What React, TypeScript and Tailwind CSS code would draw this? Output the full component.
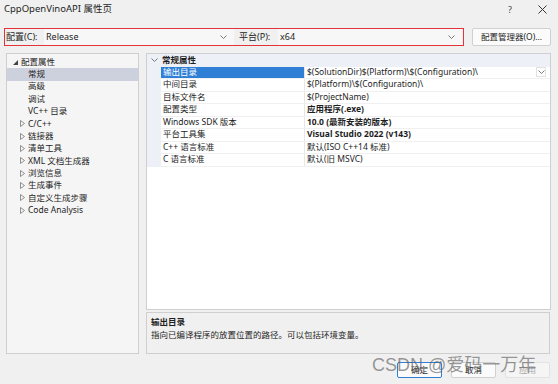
import React from "react"

const font = { fontFamily: '"Noto Sans", "Noto Sans CJK SC", sans-serif' }

const treeChildren = ["常规", "高级", "调试", "VC++ 目录"]
const treeCollapsed = ["C/C++", "链接器", "清单工具", "XML 文档生成器", "浏览信息", "生成事件", "自定义生成步骤", "Code Analysis"]

const props: { name: string; value: string; bold?: boolean }[] = [
  { name: "输出目录", value: "$(SolutionDir)$(Platform)\\$(Configuration)\\" },
  { name: "中间目录", value: "$(Platform)\\$(Configuration)\\" },
  { name: "目标文件名", value: "$(ProjectName)" },
  { name: "配置类型", value: "应用程序(.exe)", bold: true },
  { name: "Windows SDK 版本", value: "10.0 (最新安装的版本)", bold: true },
  { name: "平台工具集", value: "Visual Studio 2022 (v143)", bold: true },
  { name: "C++ 语言标准", value: "默认(ISO C++14 标准)" },
  { name: "C 语言标准", value: "默认(旧 MSVC)" },
]

function Chevron({ className = "" }: { className?: string }) {
  return (
    <svg width="7" height="4" viewBox="0 0 7 4" className={className}>
      <path d="M0.5 0.5 L3.5 3.5 L6.5 0.5" fill="none" stroke="#6b6b6b" strokeWidth="0.9" />
    </svg>
  )
}

function Combo({ label, value, labelW, width }: { label: string; value: string; labelW: string; width: string }) {
  return (
    <div className="flex h-full items-stretch">
      <div className={`flex items-center text-[9px] text-[#1e1e1e] ${labelW}`}>{label}</div>
      <div className={`flex items-center justify-between bg-[#f7f7f7] pl-[2px] pr-[7px] text-[9px] text-[#1e1e1e] ${width}`}>
        <span>{value}</span>
        <Chevron />
      </div>
    </div>
  )
}

export default function App() {
  return (
    <div className="relative h-[384px] w-[558px] overflow-hidden bg-[#f0f0f0] text-[#1e1e1e]" style={font}>
      {/* title */}
      <div className="flex h-[19px] items-center justify-between pl-[4px] pr-[11px]">
        <span className="text-[9.5px]">CppOpenVinoAPI 属性页</span>
        <div className="flex items-center gap-[26px] text-[#444]">
          <span className="text-[9px]">?</span>
          <svg width="9" height="9" viewBox="0 0 9 9">
            <path d="M0.5 0.5 L8.5 8.5 M8.5 0.5 L0.5 8.5" stroke="#333" strokeWidth="1" />
          </svg>
        </div>
      </div>

      {/* config row */}
      <div className="mt-[9px] flex h-[18px] items-stretch pl-[4px]">
        <div className="flex w-[460px] items-stretch border border-[#e5333a]">
          <Combo label="配置(C):" value="Release" labelW="w-[39px] pl-[1px]" width="w-[190px]" />
          <Combo label="平台(P):" value="x64" labelW="w-[44px] pl-[5px]" width="w-[184px]" />
        </div>
        <button className="ml-[8px] flex w-[79px] items-center justify-center rounded-[2px] border border-[#d0d0d0] bg-[#fbfbfb] text-[8.5px] text-[#1e1e1e]">
          配置管理器(O)...
        </button>
      </div>

      {/* main */}
      <div className="mt-[7px] flex h-[301px] pl-[6px]">
        {/* tree */}
        <div className="w-[133px] border border-[#cfcfcf] bg-[#f5f5f5] pt-[2px] text-[8.5px]">
          <div className="flex h-[12.35px] items-center pl-[6px]">
            <svg width="5" height="5" viewBox="0 0 5 5" className="mr-[3px]">
              <path d="M5 0 L5 5 L0 5 Z" fill="#444" />
            </svg>
            <span>配置属性</span>
          </div>
          {treeChildren.map((t, i) => (
            <div key={t} className={`flex h-[12.35px] items-center pl-[21px] ${i === 0 ? "bg-[#cdd1dd]" : ""}`}>
              {t}
            </div>
          ))}
          {treeCollapsed.map((t) => (
            <div key={t} className="flex h-[12.35px] items-center pl-[13px]">
              <svg width="5" height="7" viewBox="0 0 5 7" className="mr-[3px]">
                <path d="M0.5 0.5 L4.5 3.5 L0.5 6.5 Z" fill="none" stroke="#777" strokeWidth="0.8" />
              </svg>
              <span>{t}</span>
            </div>
          ))}
        </div>

        {/* right column */}
        <div className="ml-[7px] flex w-[405px] flex-col">
          <div className="h-[257px] border border-[#cfcfcf] bg-white text-[8.5px]">
            <div className="flex h-[12.5px] items-center bg-[#edf1f7]">
              <div className="flex w-[15px] justify-center">
                <Chevron />
              </div>
              <span className="font-bold">常规属性</span>
            </div>
            <div className="flex">
              <div className="w-[14px] bg-[#edf1f7]" />
              <div className="flex-1">
                {props.map((p, i) => (
                  <div key={p.name} className="flex h-[12.5px] border-b border-[#f0f0f0]">
                    <div
                      className={`flex w-[144px] items-center border-r border-[#e6e6e6] pl-[2px] ${i === 0 ? "bg-[#2f7fd6] text-white" : ""}`}
                    >
                      {p.name}
                    </div>
                    <div className={`flex flex-1 items-center justify-between pl-[2px] pr-[4px] ${p.bold ? "font-bold" : ""}`}>
                      <span>{p.value}</span>
                      {i === 0 && (
                        <div className="flex h-[10px] w-[10px] items-center justify-center border border-[#e2e2e2]">
                          <Chevron />
                        </div>
                      )}
                    </div>
                  </div>
                ))}
              </div>
            </div>
          </div>

          <div className="mt-[2px] h-[42px] w-[404px] border border-[#cfcfcf] bg-[#f0f0f0] px-[4px] pt-[2px] text-[8.5px]">
            <div className="font-bold leading-[13px]">输出目录</div>
            <div className="leading-[13px]">指向已编译程序的放置位置的路径。可以包括环境变量。</div>
          </div>
        </div>
      </div>

      {/* buttons */}
      <div className="mt-[8px] flex h-[16px] justify-end gap-[9px] pr-[8px] text-[8.5px]">
        <button className="w-[45px] rounded-[2px] border border-[#2f7fd6] bg-[#fbfbfb]">确定</button>
        <button className="w-[45px] rounded-[2px] border border-[#d0d0d0] bg-[#fbfbfb]">取消</button>
        <button className="w-[45px] rounded-[2px] border border-[#e2e2e2] bg-[#f5f5f5] text-[#a8a8a8]">应用</button>
      </div>

      {/* watermark */}
      <div
        className="pointer-events-none absolute left-[372px] top-[354px] whitespace-nowrap text-[18px] leading-[22px] text-[#555]/60"
        style={{ fontFamily: '"Liberation Sans", "Noto Sans CJK SC", sans-serif' }}
      >
        CSDN @爱码一万年
      </div>
    </div>
  )
}
